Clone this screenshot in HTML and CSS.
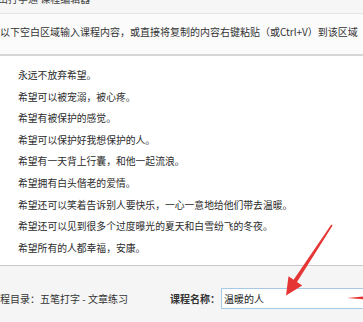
FILE: index.html
```html
<!DOCTYPE html>
<html lang="zh-CN">
<head>
  <meta charset="UTF-8">
  <title>课程编辑器</title>
  <link rel="stylesheet" href="styles.css">
</head>
<body>

  <!-- 标题栏 -->
  <div class="titlebar"><span>金山打字通 课程编辑器</span></div>

  <!-- 提示 -->
  <div class="tip">以下空白区域输入课程内容，或直接将复制的内容右键粘贴（或Ctrl+V）到该区域</div>

  <!-- 课程内容 -->
  <div class="content">
    <p>永远不放弃希望。</p>
    <p>希望可以被宠溺，被心疼。</p>
    <p>希望有被保护的感觉。</p>
    <p>希望可以保护好我想保护的人。</p>
    <p>希望有一天背上行囊，和他一起流浪。</p>
    <p>希望拥有白头偕老的爱情。</p>
    <p>希望还可以笑着告诉别人要快乐，一心一意地给他们带去温暖。</p>
    <p>希望还可以见到很多个过度曝光的夏天和白雪纷飞的冬夜。</p>
    <p>希望所有的人都幸福，安康。</p>
  </div>

  <!-- 底部 -->
  <div class="footer">
    <div class="catalog">课程目录：五笔打字 - 文章练习</div>
    <div class="name-label">课程名称：</div>
    <input class="name-input" type="text" value="温暖的人">
  </div>

  <!-- 红色箭头标注 -->
  <svg class="marks" width="363" height="322" viewBox="0 0 363 322">
    <polygon fill="#e63535" points="331.3,224.6 332.6,225.4 297,281.9 302.2,285.4 286,295.5 288.5,276.3 293.6,279.7"/>
    <polygon fill="#e63535" points="347,298 363,296.6 363,299.2"/>
  </svg>

</body>
</html>
```

FILE: styles.css
```css
/* 基本 */
body {
  margin: 0;
  width: 363px;
  height: 322px;
  overflow: hidden;
  position: relative;
  font-family: "Noto Sans CJK SC", "Microsoft YaHei", sans-serif;
  color: #333;
  background-color: #fff;
}

/* 标题栏 */
.titlebar {
  height: 13px;
  background-color: #f6f6f6;
  border-bottom: 1px solid #e4e4e4;
  overflow: hidden;
}

.titlebar span {
  display: block;
  margin-top: -8px;
  margin-left: -12px;
  font-size: 10px;
  line-height: 14px;
  color: #444;
  white-space: nowrap;
}

/* 提示 */
.tip {
  height: 40px;
  line-height: 36px;
  background-color: #fbfbfb;
  border-bottom: 2px solid #d6d6d6;
  font-size: 10px;
  white-space: nowrap;
  overflow: hidden;
}

/* 课程内容 */
.content {
  height: 200px;
  padding: 9px 18px 0;
  border-bottom: 1px solid #c9c9c9;
  font-size: 9.8px;
  line-height: 21.6px;
  color: #2b2b2b;
}

.content p {
  margin: 0;
  white-space: nowrap;
}

/* 底部 */
.footer {
  display: flex;
  align-items: flex-start;
  height: 34px;
  padding-top: 22px;
  background-color: #f5f5f5;
  font-size: 10px;
  line-height: 21px;
  white-space: nowrap;
}

.catalog {
  flex: 0 0 180px;
  margin-left: -10px;
}

.name-label {
  flex: 0 0 51px;
  font-weight: bold;
}

.name-input {
  flex: 0 0 180px;
  box-sizing: border-box;
  height: 21px;
  margin: 0;
  padding: 0 2px;
  border: 1px solid #a6c9e8;
  background-color: #fff;
  font-family: inherit;
  font-size: 10px;
  color: #222;
  outline: none;
}

/* 标注 */
.marks {
  position: absolute;
  left: 0;
  top: 0;
}
```
